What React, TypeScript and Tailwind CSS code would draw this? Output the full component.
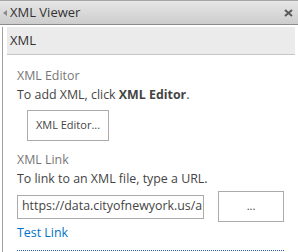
import React from 'react';

const font = { fontFamily: '"Open Sans", "Noto Sans", sans-serif' };

export default function App() {
  return (
    <div className="w-[298px] h-[252px] bg-white overflow-hidden text-[12.4px] text-[#444]" style={font}>
      {/* Pane header */}
      <div className="h-[25px] flex items-center border-t border-b border-t-[#a6a6a6] border-b-[#8c8c8c] bg-gradient-to-b from-[#e6e6e6] to-[#cdcdcd]">
        <svg width="4" height="6" viewBox="0 0 4 6" className="ml-[3px]">
          <path d="M4 0 L0 3 L4 6 Z" fill="#8a8a8a" />
        </svg>
        <span className="ml-[3px] text-[13px] text-[#333] leading-none">XML Viewer</span>
        <svg width="9" height="8" viewBox="0 0 9 8" className="ml-auto mr-[5px]">
          <path d="M1 1 L8 7 M8 1 L1 7" stroke="#5a5a5a" strokeWidth="2" />
        </svg>
      </div>

      <div className="ml-[2px] border-l border-[#a0a0a0] h-full">
        {/* Section bar */}
        <div className="ml-[4px] mr-[3px] mt-[2px] h-[28px] bg-[#ebebeb] border-b border-[#c6c6c6] flex items-center pl-[3px]">
          <span className="text-[#333] text-[13px]">XML</span>
        </div>

        <div className="pl-[14px] pr-[14px] pt-[11px]">
          <div className="text-[#777] leading-[19px]">XML Editor</div>
          <div className="leading-[19px]">
            To add XML, click <span className="font-bold">XML Editor</span>.
          </div>
          <button className="ml-[10px] mt-[6px] w-[82px] h-[31px] border border-[#ababab] bg-white text-[11px] text-[#444]">
            XML Editor...
          </button>

          <div className="text-[#777] leading-[19px] mt-[9px]">XML Link</div>
          <div className="leading-[19px]">To link to an XML file, type a URL.</div>
          <div className="flex items-center mt-[3px]">
            <div className="w-[187px] h-[24px] border border-[#ababab] flex items-center px-[4px] overflow-hidden whitespace-nowrap text-[#444]">
              https://data.cityofnewyork.us/api
            </div>
            <button className="ml-[14px] w-[66px] h-[31px] border border-[#ababab] bg-white text-[11px] text-[#444]">
              ...
            </button>
          </div>
          <div className="text-[#0072c6] leading-[19px] mt-[1px]">Test Link</div>
          <div className="mt-[8px] w-[267px] border-b border-dotted border-[#2a5db0]" />
        </div>
      </div>
    </div>
  );
}
